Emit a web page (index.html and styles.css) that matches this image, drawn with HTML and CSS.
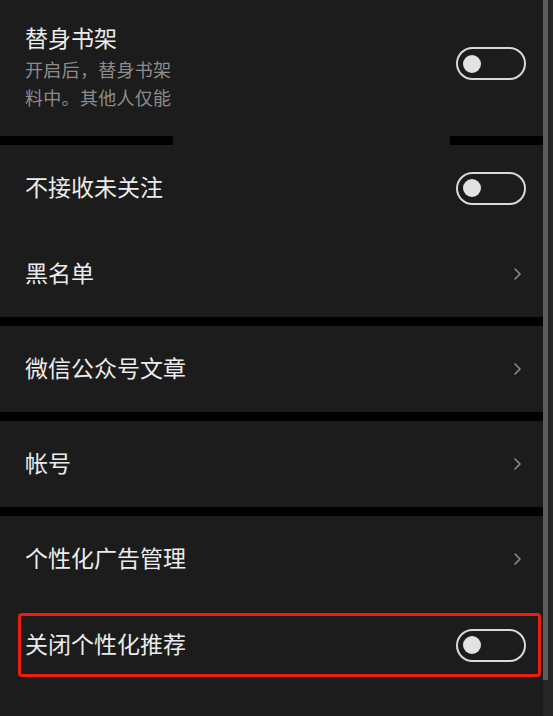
FILE: index.html
```html
<!DOCTYPE html>
<html lang="zh-CN">
  <head>
    <meta charset="UTF-8" />
    <meta name="viewport" content="width=device-width, initial-scale=1.0" />
    <title>隐私设置</title>
    <link rel="stylesheet" href="styles.css">
  </head>
  <body>
    <div class="screen">
      <div class="settings">
        <div class="group first">
          <div class="text-block">
            <div class="title">替身书架</div>
            <div class="desc">开启后，替身书架</div>
            <div class="desc">料中。其他人仅能</div>
          </div>
          <div class="toggle top"><span class="knob"></span></div>
        </div>

        <div class="divider split">
          <span class="seg left"></span>
          <span class="seg right"></span>
        </div>

        <div class="group">
          <div class="row">
            <div class="title">不接收未关注</div>
            <div class="toggle"><span class="knob"></span></div>
          </div>
          <div class="row">
            <div class="title">黑名单</div>
            <svg class="chevron" width="9" height="14" viewBox="0 0 9 14"><polyline points="2,2 7,7 2,12" /></svg>
          </div>
        </div>

        <div class="divider"></div>

        <div class="group">
          <div class="row">
            <div class="title">微信公众号文章</div>
            <svg class="chevron" width="9" height="14" viewBox="0 0 9 14"><polyline points="2,2 7,7 2,12" /></svg>
          </div>
        </div>

        <div class="divider"></div>

        <div class="group">
          <div class="row">
            <div class="title">帐号</div>
            <svg class="chevron" width="9" height="14" viewBox="0 0 9 14"><polyline points="2,2 7,7 2,12" /></svg>
          </div>
        </div>

        <div class="divider"></div>

        <div class="group last">
          <div class="row">
            <div class="title">个性化广告管理</div>
            <svg class="chevron" width="9" height="14" viewBox="0 0 9 14"><polyline points="2,2 7,7 2,12" /></svg>
          </div>
          <div class="row marked">
            <div class="title">关闭个性化推荐</div>
            <div class="toggle"><span class="knob"></span></div>
          </div>
        </div>
      </div>

      <div class="scrollbar"><span class="thumb"></span></div>
    </div>
  </body>
</html>
```

FILE: styles.css
```css
* {
  box-sizing: border-box;
}

html,
body {
  margin: 0;
  height: 100%;
  background: #1c1c1c;
}

body {
  font-family: "Noto Sans CJK SC", "Noto Sans", sans-serif;
  color: #ebebeb;
}

.screen {
  display: flex;
  height: 716px;
}

.settings {
  width: 543px;
  display: flex;
  flex-direction: column;
}

.group {
  background: #1c1c1c;
}

.group.first {
  height: 136px;
  display: flex;
  justify-content: space-between;
  align-items: flex-start;
  padding: 22px 17px 0 25px;
}

.group.last {
  flex: 1;
}

.row {
  height: 86px;
  display: flex;
  align-items: center;
  justify-content: space-between;
  padding: 0 17px 0 25px;
}

.title {
  font-size: 23px;
  line-height: 30px;
  color: #ececec;
  white-space: nowrap;
}

.row .title {
  margin-bottom: 4px;
}

.desc {
  font-size: 18px;
  line-height: 28px;
  color: #8c8c8c;
  white-space: nowrap;
  letter-spacing: 0.3px;
}

.text-block .title {
  margin-bottom: 3px;
}

.toggle {
  width: 70px;
  height: 33px;
  border: 2px solid #d9d9d9;
  border-radius: 17px;
  display: flex;
  align-items: center;
  padding-left: 5px;
}

.toggle.top {
  margin-top: 25px;
}

.knob {
  width: 18px;
  height: 18px;
  border-radius: 50%;
  background: #e2e2e2;
}

.chevron {
  margin-right: 4px;
}

.chevron polyline {
  fill: none;
  stroke: #8a8a8a;
  stroke-width: 1.6;
  stroke-linecap: round;
  stroke-linejoin: round;
}

.divider {
  height: 9px;
  background: #000;
}

.divider.split {
  display: flex;
  justify-content: space-between;
  background: #1c1c1c;
}

.divider .seg {
  background: #000;
  height: 100%;
}

.divider .left {
  width: 173px;
}

.divider .right {
  width: 93px;
}

.row.marked {
  height: 64px;
  margin: 11px 2px 0 18px;
  padding: 0 12px 0 4px;
  border: 3px solid #ee1c0e;
  border-radius: 4px;
}

.scrollbar {
  width: 10px;
  background: #262626;
}

.scrollbar .thumb {
  display: block;
  width: 5px;
  height: 680px;
  background: #5c5c5c;
}
```
